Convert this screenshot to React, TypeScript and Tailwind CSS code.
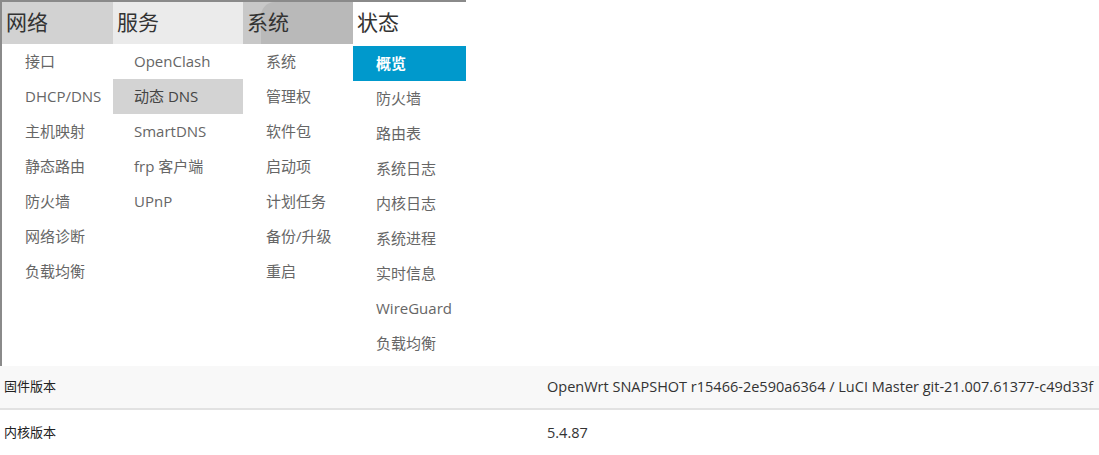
import React from "react";

type Column = {
  title: string;
  width: string;
  headerClass: string;
  itemPad: string;
  items: string[];
  active?: number;
  activeClass?: string;
  offsetTop?: string;
};

const columns: Column[] = [
  {
    title: "网络",
    width: "w-[111px]",
    headerClass: "bg-[#d2d2d2]",
    itemPad: "pl-[23px]",
    items: ["接口", "DHCP/DNS", "主机映射", "静态路由", "防火墙", "网络诊断", "负载均衡"],
  },
  {
    title: "服务",
    width: "w-[130px]",
    headerClass: "bg-[#ebebeb]",
    itemPad: "pl-[21px]",
    items: ["OpenClash", "动态 DNS", "SmartDNS", "frp 客户端", "UPnP"],
    active: 1,
    activeClass: "bg-[#d3d3d3] text-[#444]",
  },
  {
    title: "系统",
    width: "w-[110px]",
    headerClass: "bg-[#c8c8c8]",
    itemPad: "pl-[23px]",
    items: ["系统", "管理权", "软件包", "启动项", "计划任务", "备份/升级", "重启"],
  },
  {
    title: "状态",
    width: "w-[113px]",
    headerClass: "bg-white",
    itemPad: "pl-[23px]",
    items: ["概览", "防火墙", "路由表", "系统日志", "内核日志", "系统进程", "实时信息", "WireGuard", "负载均衡"],
    active: 0,
    activeClass: "bg-[#0099cc] text-white font-semibold",
    offsetTop: "pt-[2px]",
  },
];

const font = "font-['Segoe_UI','Open_Sans','Noto_Sans_CJK_SC',sans-serif]";

function MenuColumn({ col }: { col: Column }) {
  return (
    <div className={`${col.width} flex flex-col`}>
      <div className={`relative h-[42px] ${col.headerClass}`}>
        {col.title === "系统" && (
          <div className="absolute inset-y-0 left-[18px] right-0 rounded-tl-[14px] bg-[#b9b9b9]" />
        )}
        <span className="relative block pl-[4px] pt-[6px] text-[21px] leading-[28px] text-[#333]">
          {col.title}
        </span>
      </div>
      <ul className={`flex flex-col ${col.offsetTop ?? ""}`}>
        {col.items.map((item, i) => (
          <li
            key={item + i}
            className={`h-[35px] flex items-center ${col.itemPad} text-[15px] ${
              i === col.active ? col.activeClass : "text-[#666]"
            }`}
          >
            {item}
          </li>
        ))}
      </ul>
    </div>
  );
}

export default function App() {
  return (
    <div className={`w-[1099px] h-[455px] bg-white overflow-hidden ${font}`}>
      <div className="w-[466px] h-[366px] flex border-t-2 border-l-2 border-[#8a8a8a]">
        {columns.map((c) => (
          <MenuColumn key={c.title} col={c} />
        ))}
      </div>
      <div className="flex flex-col">
        <div className="h-[44px] flex items-center bg-[#f8f8f8] border-b-2 border-[#e2e2e2] text-[13px]">
          <div className="w-[547px] pl-[4px] text-[#222]">固件版本</div>
          <div className="text-[14.5px] text-[#333]">
            OpenWrt SNAPSHOT r15466-2e590a6364 / LuCI Master git-21.007.61377-c49d33f
          </div>
        </div>
        <div className="h-[45px] flex items-center bg-white text-[13px]">
          <div className="w-[547px] pl-[4px] text-[#222]">内核版本</div>
          <div className="text-[14.5px] text-[#333]">5.4.87</div>
        </div>
      </div>
    </div>
  );
}
